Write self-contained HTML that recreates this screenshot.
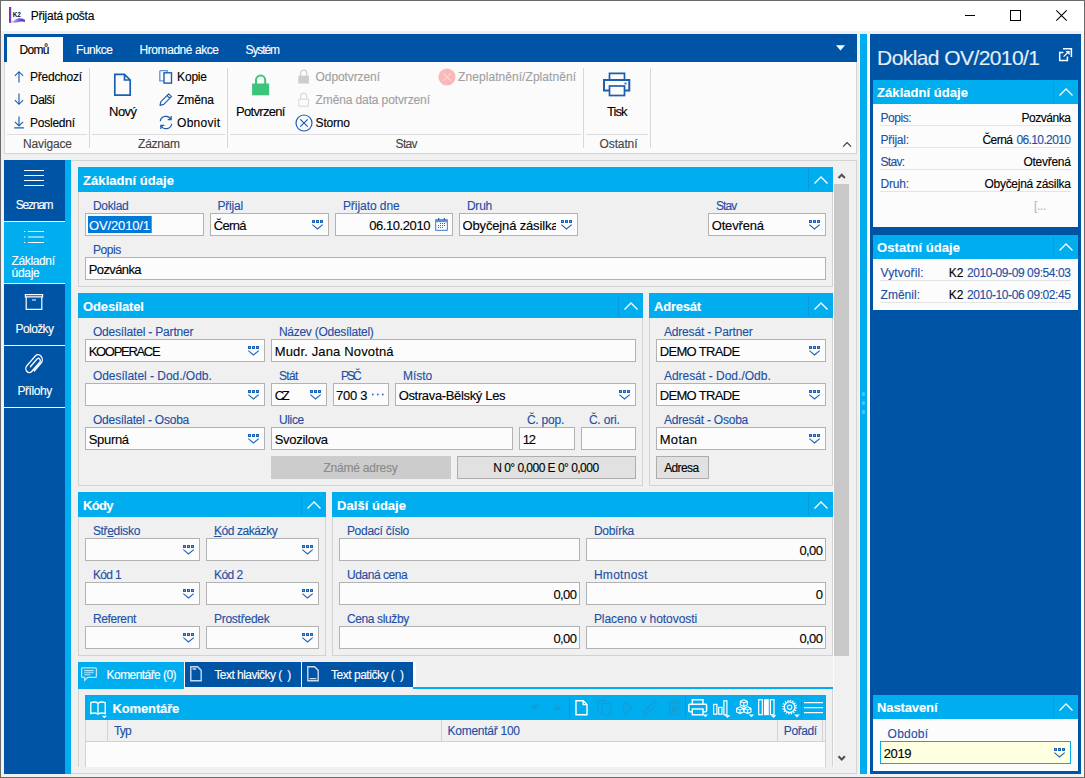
<!DOCTYPE html>
<html lang="cs"><head><meta charset="utf-8"><title>Přijatá pošta</title>
<style>
*{box-sizing:border-box;margin:0;padding:0}
html,body{width:1085px;height:778px;overflow:hidden}
body{background:#f0f0f0;font-family:"Liberation Sans",sans-serif;font-size:12px;position:relative}
.a{position:absolute;display:block}
.t{position:absolute;white-space:nowrap;display:block;-webkit-text-stroke:0.12px currentColor}
u{text-decoration:underline;text-underline-offset:1px}
</style></head>
<body>
<div class="a" style="left:0px;top:0px;width:1085px;height:778px;background:#f0f0f0;"></div>
<div class="a" style="left:1px;top:1px;width:1083px;height:30px;background:#ffffff;"></div>
<svg class="a" style="left:9px;top:7px;" width="17" height="16" viewBox="0 0 17 16"><defs><linearGradient id="k2g" x1="0" x2="1" y1="0" y2="0"><stop offset="0" stop-color="#e6c8f0"/><stop offset="0.45" stop-color="#9a6ad8"/><stop offset="0.75" stop-color="#4a46c8"/><stop offset="1" stop-color="#7a48c0"/></linearGradient></defs><rect x="0" y="0" width="2.2" height="15.8" fill="#7638b8"/><path d="M2.2 15.6 L2.2 14.6 C5 14 7 11.6 10 11.2 C12.5 10.9 14.6 12 16 12.6 L16 15 C13.5 14 11 14.4 8.5 15.3 C6.5 16 4 15.8 2.2 15.6 Z" fill="url(#k2g)"/><text x="3.7" y="10.4" font-family="Liberation Sans" font-weight="bold" font-size="6.4" fill="#111">K2</text></svg>
<span class="t" id="t1" style="top:9px;font-size:12px;line-height:14px;height:14px;color:#000;left:30.70px;letter-spacing:-0.251px;">Přijatá pošta</span>
<svg class="a" style="left:960px;top:4.5px;" width="20" height="20" viewBox="0 0 20 20"><path d="M5 10.5 H15" stroke="#000" stroke-width="1"/></svg>
<svg class="a" style="left:1005px;top:4.5px;" width="20" height="20" viewBox="0 0 20 20"><rect x="5.5" y="5.5" width="10" height="10" fill="none" stroke="#000" stroke-width="1"/></svg>
<svg class="a" style="left:1051px;top:4.5px;" width="20" height="20" viewBox="0 0 20 20"><path d="M5.3 5.3 L15.7 15.7 M15.7 5.3 L5.3 15.7" stroke="#000" stroke-width="1.1"/></svg>
<div class="a" style="left:4px;top:34px;width:853px;height:120px;background:#fbfbfb;border:1px solid #d4d4d4;"></div>
<div class="a" style="left:4px;top:34px;width:853px;height:28px;background:#0054a6;"></div>
<div class="a" style="left:7px;top:37px;width:56px;height:25px;background:#fbfbfb;"></div>
<span class="t" id="t2" style="top:43px;font-size:12px;line-height:14px;height:14px;color:#000;left:19.50px;letter-spacing:-0.705px;">Domů</span>
<span class="t" id="t3" style="top:43px;font-size:12px;line-height:14px;height:14px;color:#fff;left:76.10px;letter-spacing:-0.493px;">Funkce</span>
<span class="t" id="t4" style="top:43px;font-size:12px;line-height:14px;height:14px;color:#fff;left:139.60px;letter-spacing:-0.443px;">Hromadné akce</span>
<span class="t" id="t5" style="top:43px;font-size:12px;line-height:14px;height:14px;color:#fff;left:245.60px;letter-spacing:-1.124px;">Systém</span>
<svg class="a" style="left:836px;top:45px;" width="9" height="6" viewBox="0 0 9 6"><path d="M0 0.3 H9 L4.5 5.6 Z" fill="#fff"/></svg>
<svg class="a" style="left:842px;top:141px;" width="10" height="7" viewBox="0 0 10 7"><path d="M1.1 5.6 L5.1 1.5 L9.1 5.6" fill="none" stroke="#3a3a3a" stroke-width="1.1"/></svg>
<div class="a" style="left:89px;top:68px;width:1px;height:80px;background:#d8d8d8;"></div>
<div class="a" style="left:227px;top:68px;width:1px;height:80px;background:#d8d8d8;"></div>
<div class="a" style="left:583px;top:68px;width:1px;height:80px;background:#d8d8d8;"></div>
<div class="a" style="left:650px;top:68px;width:1px;height:80px;background:#d8d8d8;"></div>
<div class="a" style="left:7px;top:134px;width:80px;height:1px;background:#dcdcdc;"></div>
<div class="a" style="left:92px;top:134px;width:133px;height:1px;background:#dcdcdc;"></div>
<div class="a" style="left:230px;top:134px;width:351px;height:1px;background:#dcdcdc;"></div>
<div class="a" style="left:586px;top:134px;width:62px;height:1px;background:#dcdcdc;"></div>
<span class="t" id="t6" style="top:137px;font-size:12px;line-height:14px;height:14px;color:#444;left:23.10px;letter-spacing:-0.163px;">Navigace</span>
<span class="t" id="t7" style="top:137px;font-size:12px;line-height:14px;height:14px;color:#444;left:138.10px;letter-spacing:-0.290px;">Záznam</span>
<span class="t" id="t8" style="top:137px;font-size:12px;line-height:14px;height:14px;color:#444;left:395.60px;letter-spacing:-0.708px;">Stav</span>
<span class="t" id="t9" style="top:137px;font-size:12px;line-height:14px;height:14px;color:#444;left:599.60px;letter-spacing:-0.131px;">Ostatní</span>
<span class="t" id="t10" style="top:70px;font-size:12px;line-height:14px;height:14px;color:#000;left:30.10px;letter-spacing:-0.266px;">Předchozí</span>
<span class="t" id="t11" style="top:93px;font-size:12px;line-height:14px;height:14px;color:#000;left:30.10px;letter-spacing:-0.610px;">Další</span>
<span class="t" id="t12" style="top:116px;font-size:12px;line-height:14px;height:14px;color:#000;left:30.10px;letter-spacing:-0.258px;">Poslední</span>
<svg class="a" style="left:13px;top:70px;" width="12" height="13" viewBox="0 0 12 13"><path d="M6 1.6 V12.5 M1.9 5.8 L6 1.7 L10.1 5.8" fill="none" stroke="#1c5fb0" stroke-width="1.15"/></svg>
<svg class="a" style="left:13px;top:93px;" width="12" height="13" viewBox="0 0 12 13"><path d="M6 0.5 V11.4 M1.9 7.2 L6 11.3 L10.1 7.2" fill="none" stroke="#1c5fb0" stroke-width="1.15"/></svg>
<svg class="a" style="left:13px;top:115px;" width="12" height="14" viewBox="0 0 12 14"><path d="M6 1.5 V11 M1.9 6.9 L6 11 L10.1 6.9 M1.2 12.9 H10.8" fill="none" stroke="#1c5fb0" stroke-width="1.15"/></svg>
<svg class="a" style="left:113px;top:73px;" width="19" height="24" viewBox="0 0 19 24"><path d="M1.8 1.3 H11.5 L17.2 7 V22.2 H1.8 Z M11.5 1.3 V7 H17.2" fill="none" stroke="#1c5fb0" stroke-width="1.7" stroke-linejoin="miter"/></svg>
<span class="t" id="t13" style="top:104px;font-size:13px;line-height:15px;height:15px;color:#000;left:109.10px;letter-spacing:-0.576px;">Nový</span>
<svg class="a" style="left:158px;top:70px;" width="16" height="15" viewBox="0 0 16 15"><path d="M1.8 0.7 H9.2 V2.6 M1.8 0.7 V10.9 H5.6" fill="none" stroke="#5f93d4" stroke-width="1.3"/><rect x="6" y="2.8" width="7.5" height="10.3" fill="none" stroke="#1c5fb0" stroke-width="1.4"/></svg>
<svg class="a" style="left:158px;top:92px;" width="16" height="15" viewBox="0 0 16 15"><path d="M2 13.3 L2.9 9.6 L10.7 1.8 L13.5 4.6 L5.7 12.4 Z M9 3.5 L11.8 6.3" fill="none" stroke="#1c5fb0" stroke-width="1.2" stroke-linejoin="round"/></svg>
<svg class="a" style="left:158px;top:115px;" width="16" height="15" viewBox="0 0 16 15"><path d="M2.3 6.3 A5.6 5.6 0 0 1 12.8 4.3 M13.2 1 V4.6 H9.7 M13.7 8.7 A5.6 5.6 0 0 1 3.2 10.7 M2.8 14 V10.4 H6.3" fill="none" stroke="#1c5fb0" stroke-width="1.2"/></svg>
<span class="t" id="t14" style="top:70px;font-size:12px;line-height:14px;height:14px;color:#000;left:177.10px;letter-spacing:-0.198px;">Kopie</span>
<span class="t" id="t15" style="top:93px;font-size:12px;line-height:14px;height:14px;color:#000;left:177.10px;letter-spacing:-0.114px;">Změna</span>
<span class="t" id="t16" style="top:116px;font-size:12px;line-height:14px;height:14px;color:#000;left:177.10px;letter-spacing:0.255px;">Obnovit</span>
<svg class="a" style="left:252px;top:73.5px;" width="18" height="22" viewBox="0 0 18 22"><path d="M4 10 V6.2 A4.6 4.6 0 0 1 13.2 6.2 V10" fill="none" stroke="#3cc47a" stroke-width="2"/><rect x="0.1" y="9.5" width="17" height="11.8" fill="#3cc47a"/></svg>
<span class="t" id="t17" style="top:104px;font-size:13px;line-height:15px;height:15px;color:#000;left:236.10px;letter-spacing:-0.691px;">Potvrzení</span>
<svg class="a" style="left:298px;top:69px;" width="12" height="15" viewBox="0 0 12 15"><path d="M2.6 7 V4.2 A3.05 3.05 0 0 1 8.7 4.2 V7" fill="none" stroke="#cfcfcf" stroke-width="1.3"/><rect x="0.3" y="6.7" width="10.7" height="7.8" fill="#cdcdcd"/></svg>
<svg class="a" style="left:298px;top:92px;" width="12" height="15" viewBox="0 0 12 15"><path d="M2.6 7 V4.2 A3.05 3.05 0 0 1 8.7 4.2 V7" fill="none" stroke="#dadada" stroke-width="1.2"/><rect x="0.8" y="7.2" width="9.7" height="7" fill="#fbfbfb" stroke="#dadada" stroke-width="1.1"/></svg>
<svg class="a" style="left:294.5px;top:113.5px;" width="18" height="18" viewBox="0 0 18 18"><circle cx="9" cy="9" r="8" fill="#fbfbfb" stroke="#1c5fb0" stroke-width="1.2"/><path d="M5.3 5.3 L12.7 12.7 M12.7 5.3 L5.3 12.7" stroke="#1c5fb0" stroke-width="1.2"/></svg>
<span class="t" id="t18" style="top:70px;font-size:12px;line-height:14px;height:14px;color:#a0a0a0;left:315.60px;letter-spacing:-0.097px;">Odpotvrzení</span>
<span class="t" id="t19" style="top:93px;font-size:12px;line-height:14px;height:14px;color:#a0a0a0;left:315.60px;letter-spacing:-0.123px;">Změna data potvrzení</span>
<span class="t" id="t20" style="top:116px;font-size:12px;line-height:14px;height:14px;color:#000;left:315.60px;letter-spacing:-0.193px;">Storno</span>
<svg class="a" style="left:438px;top:68px;" width="18" height="18" viewBox="0 0 18 18"><circle cx="9" cy="9" r="8.6" fill="#f9b9b9"/><path d="M5.3 5.3 L12.7 12.7 M12.7 5.3 L5.3 12.7" stroke="#fbd6d6" stroke-width="1.2"/></svg>
<span class="t" id="t21" style="top:70px;font-size:12px;line-height:14px;height:14px;color:#a0a0a0;left:458.10px;letter-spacing:0.057px;">Zneplatnění/Zplatnění</span>
<svg class="a" style="left:603px;top:72px;" width="28" height="25" viewBox="0 0 28 25"><path d="M6.5 8 V1.3 H21.5 V8" fill="none" stroke="#1c5fb0" stroke-width="1.7"/><rect x="1" y="8" width="25.3" height="10.5" fill="none" stroke="#1c5fb0" stroke-width="2"/><rect x="6.5" y="14" width="15" height="9.5" fill="#fbfbfb" stroke="#1c5fb0" stroke-width="1.7"/><rect x="21.5" y="10.7" width="2" height="1.6" fill="#1c5fb0"/></svg>
<span class="t" id="t22" style="top:104px;font-size:13px;line-height:15px;height:15px;color:#000;left:607.10px;letter-spacing:-0.984px;">Tisk</span>
<div class="a" style="left:4px;top:160px;width:61px;height:614px;background:#0054a6;"></div>
<div class="a" style="left:65px;top:160px;width:6px;height:614px;background:#00adef;"></div>
<div class="a" style="left:4px;top:222px;width:61px;height:61px;background:#00adef;"></div>
<div class="a" style="left:4px;top:221px;width:61px;height:1px;background:#ffffff;"></div>
<div class="a" style="left:4px;top:283px;width:61px;height:1px;background:#ffffff;"></div>
<div class="a" style="left:4px;top:345px;width:61px;height:1px;background:#ffffff;"></div>
<div class="a" style="left:4px;top:407px;width:61px;height:1px;background:#ffffff;"></div>
<svg class="a" style="left:24px;top:169px;" width="20" height="18" viewBox="0 0 20 18"><path d="M0 1.5 H20 M0 6.5 H20 M0 11.5 H20 M0 16.5 H20" stroke="#fff" stroke-width="1.2"/></svg>
<span class="t" id="t23" style="top:198px;font-size:12px;line-height:14px;height:14px;color:#fff;left:15.70px;letter-spacing:-1.227px;">Seznam</span>
<svg class="a" style="left:23px;top:229px;" width="22" height="16" viewBox="0 0 22 16"><path d="M5 2.5 H21 M5 8 H21 M5 13.5 H21" stroke="#fff" stroke-width="1.2"/><path d="M1 2.5 H2.3 M1 8 H2.3 M1 13.5 H2.3" stroke="#fff" stroke-width="1.2"/></svg>
<span class="t" id="t24" style="top:254px;font-size:12px;line-height:14px;height:14px;color:#fff;left:11.60px;letter-spacing:-0.377px;">Základní</span>
<span class="t" id="t25" style="top:266px;font-size:12px;line-height:14px;height:14px;color:#fff;left:11.60px;letter-spacing:-0.294px;">údaje</span>
<svg class="a" style="left:24px;top:293px;" width="20" height="18" viewBox="0 0 20 18"><path d="M1.4 1.6 H18.6 V3.9 H1.4 Z M2.2 3.9 V16.3 H17.8 V3.9 M8 7 H12" fill="none" stroke="#fff" stroke-width="1.2"/></svg>
<span class="t" id="t26" style="top:322px;font-size:12px;line-height:14px;height:14px;color:#fff;left:15.60px;letter-spacing:-0.603px;">Položky</span>
<svg class="a" style="left:25px;top:353.4px;" width="19" height="21" viewBox="0 0 19 21"><g transform="scale(0.97,1.12)"><path d="M5.2 12.6 L12.6 5.2 A2 2 0 0 1 15.4 8 L7 16.4 A3.6 3.6 0 0 1 1.9 11.3 L10.6 2.6 A4.4 4.4 0 0 1 16.8 8.8 L9.2 16.4" fill="none" stroke="#fff" stroke-width="1.3"/></g></svg>
<span class="t" id="t27" style="top:384px;font-size:12px;line-height:14px;height:14px;color:#fff;left:17.40px;letter-spacing:-0.410px;">Přílohy</span>
<div class="a" style="left:71px;top:160px;width:786px;height:614px;background:#f0f0f0;border:1px solid #d4d4d4;border-left:none;"></div>
<div class="a" style="left:834px;top:167px;width:16px;height:600px;background:#f0f0f0;"></div>
<div class="a" style="left:834px;top:184px;width:15px;height:472px;background:#c8c8c8;"></div>
<div class="a" style="left:833px;top:167px;width:1px;height:600px;background:#fafafa;"></div>
<svg class="a" style="left:837px;top:172px;" width="10" height="8" viewBox="0 0 10 8"><path d="M1.5 6 L4.7 2.7 L7.9 6" fill="none" stroke="#505050" stroke-width="2"/></svg>
<svg class="a" style="left:837px;top:755px;" width="10" height="8" viewBox="0 0 10 8"><path d="M1.5 1.2 L4.7 4.5 L7.9 1.2" fill="none" stroke="#505050" stroke-width="2"/></svg>
<div class="a" style="left:78px;top:191px;width:755px;height:96px;border:1px solid #d2d2d2;border-top:none;"></div>
<div class="a" style="left:78px;top:167px;width:755px;height:25px;background:#00adef;"></div>
<span class="t" id="t28" style="top:173px;font-size:13px;line-height:15px;height:15px;color:#fff;font-weight:bold;left:83.10px;letter-spacing:0.046px;">Základní údaje</span>
<div class="a" style="left:808px;top:169px;width:1px;height:21px;background:#0a9ad6;"></div>
<svg class="a" style="left:814px;top:176px;" width="14" height="8" viewBox="0 0 14 8"><path d="M0.5 7.5 L7 1 L13.5 7.5" fill="none" stroke="#fff" stroke-width="1.3"/></svg>
<span class="t" id="t29" style="top:199px;font-size:12px;line-height:14px;height:14px;color:#1c4fa4;left:92.90px;letter-spacing:-0.293px;">Doklad</span>
<div class="a" style="left:85px;top:213px;width:119px;height:23px;background:#fcfcfc;border:1px solid #b2b2b2;"></div>
<div class="a" style="left:88px;top:216px;width:63px;height:17px;background:#0078d7;"></div>
<div class="a" style="left:151px;top:216px;width:1px;height:17px;background:#e8781e;"></div>
<span class="t" id="t30" style="top:218px;font-size:13px;line-height:15px;height:15px;color:#fff;left:89.10px;letter-spacing:-0.157px;">OV/2010/1</span>
<span class="t" id="t31" style="top:199px;font-size:12px;line-height:14px;height:14px;color:#1c4fa4;left:217.40px;letter-spacing:-0.155px;">Přijal</span>
<div class="a" style="left:210px;top:213px;width:119px;height:23px;background:#fcfcfc;border:1px solid #b2b2b2;"></div>
<span class="t" id="t32" style="top:218px;font-size:13px;line-height:15px;height:15px;color:#000;left:213.70px;letter-spacing:-0.630px;">Černá</span>
<svg class="a" style="left:312px;top:220px;" width="12" height="10" viewBox="0 0 12 10"><rect x="0" y="0" width="3" height="3" fill="#1f63b6"/><rect x="1" y="1" width="1" height="1" fill="#6a9ad6"/><rect x="4" y="0" width="3" height="3" fill="#1f63b6"/><rect x="5" y="1" width="1" height="1" fill="#6a9ad6"/><rect x="8" y="0" width="3" height="3" fill="#1f63b6"/><rect x="9" y="1" width="1" height="1" fill="#6a9ad6"/><path d="M0.3 4.6 L5.5 9 L10.7 4.6" fill="none" stroke="#1f63b6" stroke-width="1.15"/></svg>
<span class="t" id="t33" style="top:199px;font-size:12px;line-height:14px;height:14px;color:#1c4fa4;left:342.90px;letter-spacing:-0.048px;">Přijato dne</span>
<div class="a" style="left:335px;top:213px;width:118px;height:23px;background:#fcfcfc;border:1px solid #b2b2b2;"></div>
<span class="t" id="t34" style="top:218px;font-size:13px;line-height:15px;height:15px;color:#000;right:655.03px;letter-spacing:-0.430px;">06.10.2010</span>
<svg class="a" style="left:435px;top:218px;" width="13" height="13" viewBox="0 0 13 13"><rect x="0.6" y="1.6" width="11.8" height="10.8" rx="1" fill="#fff" stroke="#5f93d4" stroke-width="1.3"/><rect x="0.6" y="1.6" width="11.8" height="2.6" fill="#5f93d4"/><rect x="3" y="0" width="1.2" height="2.2" fill="#2a62b0"/><rect x="8.8" y="0" width="1.2" height="2.2" fill="#2a62b0"/><g fill="#2a66b4"><rect x="5" y="5" width="1" height="1"/><rect x="7" y="5" width="1" height="1"/><rect x="9" y="5" width="1" height="1"/><rect x="3" y="7" width="1" height="1"/><rect x="5" y="7" width="1" height="1"/><rect x="7" y="7" width="1" height="1"/><rect x="9" y="7" width="1" height="1"/><rect x="3" y="9" width="1" height="1"/><rect x="5" y="9" width="1" height="1"/><rect x="7" y="9" width="1" height="1"/></g></svg>
<span class="t" id="t35" style="top:199px;font-size:12px;line-height:14px;height:14px;color:#1c4fa4;left:466.90px;letter-spacing:-0.208px;">Druh</span>
<div class="a" style="left:459px;top:213px;width:119px;height:23px;background:#fcfcfc;border:1px solid #b2b2b2;"></div>
<svg class="a" style="left:561px;top:220px;" width="12" height="10" viewBox="0 0 12 10"><rect x="0" y="0" width="3" height="3" fill="#1f63b6"/><rect x="1" y="1" width="1" height="1" fill="#6a9ad6"/><rect x="4" y="0" width="3" height="3" fill="#1f63b6"/><rect x="5" y="1" width="1" height="1" fill="#6a9ad6"/><rect x="8" y="0" width="3" height="3" fill="#1f63b6"/><rect x="9" y="1" width="1" height="1" fill="#6a9ad6"/><path d="M0.3 4.6 L5.5 9 L10.7 4.6" fill="none" stroke="#1f63b6" stroke-width="1.15"/></svg>
<div class="a" style="left:462.5px;top:214px;width:93.5px;height:21px;overflow:hidden">
<span class="t" id="t36" style="top:4px;font-size:13px;line-height:15px;height:15px;color:#000;left:0.10px;letter-spacing:-0.159px;">Obyčejná zásilka</span>
</div>
<span class="t" id="t37" style="top:199px;font-size:12px;line-height:14px;height:14px;color:#1c4fa4;left:715.90px;letter-spacing:-0.872px;">Stav</span>
<div class="a" style="left:708px;top:213px;width:118px;height:23px;background:#fcfcfc;border:1px solid #b2b2b2;"></div>
<span class="t" id="t38" style="top:218px;font-size:13px;line-height:15px;height:15px;color:#000;left:711.70px;letter-spacing:-0.153px;">Otevřená</span>
<svg class="a" style="left:809px;top:220px;" width="12" height="10" viewBox="0 0 12 10"><rect x="0" y="0" width="3" height="3" fill="#1f63b6"/><rect x="1" y="1" width="1" height="1" fill="#6a9ad6"/><rect x="4" y="0" width="3" height="3" fill="#1f63b6"/><rect x="5" y="1" width="1" height="1" fill="#6a9ad6"/><rect x="8" y="0" width="3" height="3" fill="#1f63b6"/><rect x="9" y="1" width="1" height="1" fill="#6a9ad6"/><path d="M0.3 4.6 L5.5 9 L10.7 4.6" fill="none" stroke="#1f63b6" stroke-width="1.15"/></svg>
<span class="t" id="t39" style="top:243px;font-size:12px;line-height:14px;height:14px;color:#1c4fa4;left:92.90px;letter-spacing:-0.408px;">Popis</span>
<div class="a" style="left:85px;top:257px;width:741px;height:23px;background:#fcfcfc;border:1px solid #b2b2b2;"></div>
<span class="t" id="t40" style="top:262px;font-size:13px;line-height:15px;height:15px;color:#000;left:88.70px;letter-spacing:-0.599px;">Pozvánka</span>
<div class="a" style="left:78px;top:317px;width:565px;height:169px;border:1px solid #d2d2d2;border-top:none;"></div>
<div class="a" style="left:78px;top:293px;width:565px;height:25px;background:#00adef;"></div>
<span class="t" id="t41" style="top:299px;font-size:13px;line-height:15px;height:15px;color:#fff;font-weight:bold;left:83.10px;letter-spacing:-0.139px;">Odesílatel</span>
<div class="a" style="left:618px;top:295px;width:1px;height:21px;background:#0a9ad6;"></div>
<svg class="a" style="left:624px;top:302px;" width="14" height="8" viewBox="0 0 14 8"><path d="M0.5 7.5 L7 1 L13.5 7.5" fill="none" stroke="#fff" stroke-width="1.3"/></svg>
<span class="t" id="t42" style="top:325px;font-size:12px;line-height:14px;height:14px;color:#1c4fa4;left:92.90px;letter-spacing:-0.177px;">Odesílatel - Partner</span>
<div class="a" style="left:85px;top:339px;width:180px;height:23px;background:#fcfcfc;border:1px solid #b2b2b2;"></div>
<span class="t" id="t43" style="top:344px;font-size:13px;line-height:15px;height:15px;color:#000;left:88.70px;letter-spacing:-1.309px;">KOOPERACE</span>
<svg class="a" style="left:248px;top:346px;" width="12" height="10" viewBox="0 0 12 10"><rect x="0" y="0" width="3" height="3" fill="#1f63b6"/><rect x="1" y="1" width="1" height="1" fill="#6a9ad6"/><rect x="4" y="0" width="3" height="3" fill="#1f63b6"/><rect x="5" y="1" width="1" height="1" fill="#6a9ad6"/><rect x="8" y="0" width="3" height="3" fill="#1f63b6"/><rect x="9" y="1" width="1" height="1" fill="#6a9ad6"/><path d="M0.3 4.6 L5.5 9 L10.7 4.6" fill="none" stroke="#1f63b6" stroke-width="1.15"/></svg>
<span class="t" id="t44" style="top:325px;font-size:12px;line-height:14px;height:14px;color:#1c4fa4;left:278.90px;letter-spacing:-0.263px;">Název (Odesílatel)</span>
<div class="a" style="left:271px;top:339px;width:365px;height:23px;background:#fcfcfc;border:1px solid #b2b2b2;"></div>
<span class="t" id="t45" style="top:344px;font-size:13px;line-height:15px;height:15px;color:#000;left:274.70px;letter-spacing:0.150px;">Mudr. Jana Novotná</span>
<span class="t" id="t46" style="top:369px;font-size:12px;line-height:14px;height:14px;color:#1c4fa4;left:92.90px;letter-spacing:-0.024px;">Odesílatel - Dod./Odb.</span>
<div class="a" style="left:85px;top:383px;width:180px;height:23px;background:#fcfcfc;border:1px solid #b2b2b2;"></div>
<svg class="a" style="left:248px;top:390px;" width="12" height="10" viewBox="0 0 12 10"><rect x="0" y="0" width="3" height="3" fill="#1f63b6"/><rect x="1" y="1" width="1" height="1" fill="#6a9ad6"/><rect x="4" y="0" width="3" height="3" fill="#1f63b6"/><rect x="5" y="1" width="1" height="1" fill="#6a9ad6"/><rect x="8" y="0" width="3" height="3" fill="#1f63b6"/><rect x="9" y="1" width="1" height="1" fill="#6a9ad6"/><path d="M0.3 4.6 L5.5 9 L10.7 4.6" fill="none" stroke="#1f63b6" stroke-width="1.15"/></svg>
<span class="t" id="t47" style="top:369px;font-size:12px;line-height:14px;height:14px;color:#1c4fa4;left:278.90px;letter-spacing:-0.649px;">Stát</span>
<div class="a" style="left:271px;top:383px;width:56px;height:23px;background:#fcfcfc;border:1px solid #b2b2b2;"></div>
<span class="t" id="t48" style="top:388px;font-size:13px;line-height:15px;height:15px;color:#000;left:274.70px;letter-spacing:-2.440px;">CZ</span>
<svg class="a" style="left:310px;top:390px;" width="12" height="10" viewBox="0 0 12 10"><rect x="0" y="0" width="3" height="3" fill="#1f63b6"/><rect x="1" y="1" width="1" height="1" fill="#6a9ad6"/><rect x="4" y="0" width="3" height="3" fill="#1f63b6"/><rect x="5" y="1" width="1" height="1" fill="#6a9ad6"/><rect x="8" y="0" width="3" height="3" fill="#1f63b6"/><rect x="9" y="1" width="1" height="1" fill="#6a9ad6"/><path d="M0.3 4.6 L5.5 9 L10.7 4.6" fill="none" stroke="#1f63b6" stroke-width="1.15"/></svg>
<span class="t" id="t49" style="top:369px;font-size:12px;line-height:14px;height:14px;color:#1c4fa4;left:340.90px;letter-spacing:-1.893px;">PSČ</span>
<div class="a" style="left:333px;top:383px;width:56px;height:23px;background:#fcfcfc;border:1px solid #b2b2b2;"></div>
<span class="t" id="t50" style="top:388px;font-size:13px;line-height:15px;height:15px;color:#000;left:336.10px;letter-spacing:-0.284px;">700 3</span>
<svg class="a" style="left:372px;top:393px;" width="13" height="3" viewBox="0 0 13 3"><rect x="0" y="0.7" width="1.6" height="1.6" fill="#2a66b4"/><rect x="5" y="0.7" width="1.6" height="1.6" fill="#2a66b4"/><rect x="10" y="0.7" width="1.6" height="1.6" fill="#2a66b4"/></svg>
<span class="t" id="t51" style="top:369px;font-size:12px;line-height:14px;height:14px;color:#1c4fa4;left:402.90px;letter-spacing:0.013px;">Místo</span>
<div class="a" style="left:395px;top:383px;width:241px;height:23px;background:#fcfcfc;border:1px solid #b2b2b2;"></div>
<span class="t" id="t52" style="top:388px;font-size:13px;line-height:15px;height:15px;color:#000;left:398.70px;letter-spacing:-0.342px;">Ostrava-Bělský Les</span>
<svg class="a" style="left:619px;top:390px;" width="12" height="10" viewBox="0 0 12 10"><rect x="0" y="0" width="3" height="3" fill="#1f63b6"/><rect x="1" y="1" width="1" height="1" fill="#6a9ad6"/><rect x="4" y="0" width="3" height="3" fill="#1f63b6"/><rect x="5" y="1" width="1" height="1" fill="#6a9ad6"/><rect x="8" y="0" width="3" height="3" fill="#1f63b6"/><rect x="9" y="1" width="1" height="1" fill="#6a9ad6"/><path d="M0.3 4.6 L5.5 9 L10.7 4.6" fill="none" stroke="#1f63b6" stroke-width="1.15"/></svg>
<span class="t" id="t53" style="top:413px;font-size:12px;line-height:14px;height:14px;color:#1c4fa4;left:92.90px;letter-spacing:-0.215px;">Odesílatel - Osoba</span>
<div class="a" style="left:85px;top:427px;width:180px;height:23px;background:#fcfcfc;border:1px solid #b2b2b2;"></div>
<span class="t" id="t54" style="top:432px;font-size:13px;line-height:15px;height:15px;color:#000;left:88.70px;letter-spacing:-0.306px;">Spurná</span>
<svg class="a" style="left:248px;top:434px;" width="12" height="10" viewBox="0 0 12 10"><rect x="0" y="0" width="3" height="3" fill="#1f63b6"/><rect x="1" y="1" width="1" height="1" fill="#6a9ad6"/><rect x="4" y="0" width="3" height="3" fill="#1f63b6"/><rect x="5" y="1" width="1" height="1" fill="#6a9ad6"/><rect x="8" y="0" width="3" height="3" fill="#1f63b6"/><rect x="9" y="1" width="1" height="1" fill="#6a9ad6"/><path d="M0.3 4.6 L5.5 9 L10.7 4.6" fill="none" stroke="#1f63b6" stroke-width="1.15"/></svg>
<span class="t" id="t55" style="top:413px;font-size:12px;line-height:14px;height:14px;color:#1c4fa4;left:278.90px;letter-spacing:-0.321px;">Ulice</span>
<div class="a" style="left:271px;top:427px;width:242px;height:23px;background:#fcfcfc;border:1px solid #b2b2b2;"></div>
<span class="t" id="t56" style="top:432px;font-size:13px;line-height:15px;height:15px;color:#000;left:274.70px;letter-spacing:-0.280px;">Svozilova</span>
<span class="t" id="t57" style="top:413px;font-size:12px;line-height:14px;height:14px;color:#1c4fa4;left:526.90px;letter-spacing:-0.217px;">Č. pop.</span>
<div class="a" style="left:519px;top:427px;width:56px;height:23px;background:#fcfcfc;border:1px solid #b2b2b2;"></div>
<span class="t" id="t58" style="top:432px;font-size:13px;line-height:15px;height:15px;color:#000;left:522.70px;letter-spacing:-1.066px;">12</span>
<span class="t" id="t59" style="top:413px;font-size:12px;line-height:14px;height:14px;color:#1c4fa4;left:588.90px;letter-spacing:-0.185px;">Č. ori.</span>
<div class="a" style="left:581px;top:427px;width:55px;height:23px;background:#fcfcfc;border:1px solid #b2b2b2;"></div>
<div class="a" style="left:271px;top:456px;width:180px;height:23px;background:#cccccc;"></div>
<span class="t" id="t60" style="top:461px;font-size:12px;line-height:14px;height:14px;color:#8a8a8a;left:323.45px;letter-spacing:-0.209px;">Známé adresy</span>
<div class="a" style="left:457px;top:456px;width:179px;height:23px;background:#e1e1e1;border:1px solid #adadad;"></div>
<span class="t" id="t61" style="top:461px;font-size:12px;line-height:14px;height:14px;color:#000;left:493.20px;letter-spacing:-0.523px;">N 0° 0,000 E 0° 0,000</span>
<div class="a" style="left:649px;top:317px;width:184px;height:169px;border:1px solid #d2d2d2;border-top:none;"></div>
<div class="a" style="left:649px;top:293px;width:184px;height:25px;background:#00adef;"></div>
<span class="t" id="t62" style="top:299px;font-size:13px;line-height:15px;height:15px;color:#fff;font-weight:bold;left:654.10px;letter-spacing:-0.254px;">Adresát</span>
<div class="a" style="left:808px;top:295px;width:1px;height:21px;background:#0a9ad6;"></div>
<svg class="a" style="left:814px;top:302px;" width="14" height="8" viewBox="0 0 14 8"><path d="M0.5 7.5 L7 1 L13.5 7.5" fill="none" stroke="#fff" stroke-width="1.3"/></svg>
<span class="t" id="t63" style="top:325px;font-size:12px;line-height:14px;height:14px;color:#1c4fa4;left:663.90px;letter-spacing:-0.155px;">Adresát - Partner</span>
<div class="a" style="left:656px;top:339px;width:170px;height:23px;background:#fcfcfc;border:1px solid #b2b2b2;"></div>
<span class="t" id="t64" style="top:344px;font-size:13px;line-height:15px;height:15px;color:#000;left:659.70px;letter-spacing:-0.671px;">DEMO TRADE</span>
<svg class="a" style="left:809px;top:346px;" width="12" height="10" viewBox="0 0 12 10"><rect x="0" y="0" width="3" height="3" fill="#1f63b6"/><rect x="1" y="1" width="1" height="1" fill="#6a9ad6"/><rect x="4" y="0" width="3" height="3" fill="#1f63b6"/><rect x="5" y="1" width="1" height="1" fill="#6a9ad6"/><rect x="8" y="0" width="3" height="3" fill="#1f63b6"/><rect x="9" y="1" width="1" height="1" fill="#6a9ad6"/><path d="M0.3 4.6 L5.5 9 L10.7 4.6" fill="none" stroke="#1f63b6" stroke-width="1.15"/></svg>
<span class="t" id="t65" style="top:369px;font-size:12px;line-height:14px;height:14px;color:#1c4fa4;left:663.90px;letter-spacing:0.009px;">Adresát - Dod./Odb.</span>
<div class="a" style="left:656px;top:383px;width:170px;height:23px;background:#fcfcfc;border:1px solid #b2b2b2;"></div>
<span class="t" id="t66" style="top:388px;font-size:13px;line-height:15px;height:15px;color:#000;left:659.70px;letter-spacing:-0.671px;">DEMO TRADE</span>
<svg class="a" style="left:809px;top:390px;" width="12" height="10" viewBox="0 0 12 10"><rect x="0" y="0" width="3" height="3" fill="#1f63b6"/><rect x="1" y="1" width="1" height="1" fill="#6a9ad6"/><rect x="4" y="0" width="3" height="3" fill="#1f63b6"/><rect x="5" y="1" width="1" height="1" fill="#6a9ad6"/><rect x="8" y="0" width="3" height="3" fill="#1f63b6"/><rect x="9" y="1" width="1" height="1" fill="#6a9ad6"/><path d="M0.3 4.6 L5.5 9 L10.7 4.6" fill="none" stroke="#1f63b6" stroke-width="1.15"/></svg>
<span class="t" id="t67" style="top:413px;font-size:12px;line-height:14px;height:14px;color:#1c4fa4;left:663.90px;letter-spacing:-0.213px;">Adresát - Osoba</span>
<div class="a" style="left:656px;top:427px;width:170px;height:23px;background:#fcfcfc;border:1px solid #b2b2b2;"></div>
<span class="t" id="t68" style="top:432px;font-size:13px;line-height:15px;height:15px;color:#000;left:659.70px;letter-spacing:0.317px;">Motan</span>
<svg class="a" style="left:809px;top:434px;" width="12" height="10" viewBox="0 0 12 10"><rect x="0" y="0" width="3" height="3" fill="#1f63b6"/><rect x="1" y="1" width="1" height="1" fill="#6a9ad6"/><rect x="4" y="0" width="3" height="3" fill="#1f63b6"/><rect x="5" y="1" width="1" height="1" fill="#6a9ad6"/><rect x="8" y="0" width="3" height="3" fill="#1f63b6"/><rect x="9" y="1" width="1" height="1" fill="#6a9ad6"/><path d="M0.3 4.6 L5.5 9 L10.7 4.6" fill="none" stroke="#1f63b6" stroke-width="1.15"/></svg>
<div class="a" style="left:656px;top:456px;width:53px;height:23px;background:#e1e1e1;border:1px solid #adadad;"></div>
<span class="t" id="t69" style="top:461px;font-size:12px;line-height:14px;height:14px;color:#000;left:664.20px;letter-spacing:-0.625px;">Adresa</span>
<div class="a" style="left:78px;top:516px;width:248px;height:140px;border:1px solid #d2d2d2;border-top:none;"></div>
<div class="a" style="left:78px;top:492px;width:248px;height:25px;background:#00adef;"></div>
<span class="t" id="t70" style="top:498px;font-size:13px;line-height:15px;height:15px;color:#fff;font-weight:bold;left:83.10px;letter-spacing:-0.700px;">Kódy</span>
<div class="a" style="left:301px;top:494px;width:1px;height:21px;background:#0a9ad6;"></div>
<svg class="a" style="left:307px;top:501px;" width="14" height="8" viewBox="0 0 14 8"><path d="M0.5 7.5 L7 1 L13.5 7.5" fill="none" stroke="#fff" stroke-width="1.3"/></svg>
<span class="t" id="t71" style="top:524px;font-size:12px;line-height:14px;height:14px;color:#1c4fa4;left:92.90px;letter-spacing:-0.330px;">Stř<u>e</u>disko</span>
<div class="a" style="left:85px;top:538px;width:115px;height:23px;background:#fcfcfc;border:1px solid #b2b2b2;"></div>
<svg class="a" style="left:183px;top:545px;" width="12" height="10" viewBox="0 0 12 10"><rect x="0" y="0" width="3" height="3" fill="#1f63b6"/><rect x="1" y="1" width="1" height="1" fill="#6a9ad6"/><rect x="4" y="0" width="3" height="3" fill="#1f63b6"/><rect x="5" y="1" width="1" height="1" fill="#6a9ad6"/><rect x="8" y="0" width="3" height="3" fill="#1f63b6"/><rect x="9" y="1" width="1" height="1" fill="#6a9ad6"/><path d="M0.3 4.6 L5.5 9 L10.7 4.6" fill="none" stroke="#1f63b6" stroke-width="1.15"/></svg>
<span class="t" id="t72" style="top:524px;font-size:12px;line-height:14px;height:14px;color:#1c4fa4;left:213.90px;letter-spacing:-0.415px;"><u>K</u>ód zakázky</span>
<div class="a" style="left:206px;top:538px;width:113px;height:23px;background:#fcfcfc;border:1px solid #b2b2b2;"></div>
<svg class="a" style="left:302px;top:545px;" width="12" height="10" viewBox="0 0 12 10"><rect x="0" y="0" width="3" height="3" fill="#1f63b6"/><rect x="1" y="1" width="1" height="1" fill="#6a9ad6"/><rect x="4" y="0" width="3" height="3" fill="#1f63b6"/><rect x="5" y="1" width="1" height="1" fill="#6a9ad6"/><rect x="8" y="0" width="3" height="3" fill="#1f63b6"/><rect x="9" y="1" width="1" height="1" fill="#6a9ad6"/><path d="M0.3 4.6 L5.5 9 L10.7 4.6" fill="none" stroke="#1f63b6" stroke-width="1.15"/></svg>
<span class="t" id="t73" style="top:568px;font-size:12px;line-height:14px;height:14px;color:#1c4fa4;left:92.90px;letter-spacing:-0.618px;">Kód 1</span>
<div class="a" style="left:85px;top:582px;width:115px;height:23px;background:#fcfcfc;border:1px solid #b2b2b2;"></div>
<svg class="a" style="left:183px;top:589px;" width="12" height="10" viewBox="0 0 12 10"><rect x="0" y="0" width="3" height="3" fill="#1f63b6"/><rect x="1" y="1" width="1" height="1" fill="#6a9ad6"/><rect x="4" y="0" width="3" height="3" fill="#1f63b6"/><rect x="5" y="1" width="1" height="1" fill="#6a9ad6"/><rect x="8" y="0" width="3" height="3" fill="#1f63b6"/><rect x="9" y="1" width="1" height="1" fill="#6a9ad6"/><path d="M0.3 4.6 L5.5 9 L10.7 4.6" fill="none" stroke="#1f63b6" stroke-width="1.15"/></svg>
<span class="t" id="t74" style="top:568px;font-size:12px;line-height:14px;height:14px;color:#1c4fa4;left:213.90px;letter-spacing:-0.493px;">Kód 2</span>
<div class="a" style="left:206px;top:582px;width:113px;height:23px;background:#fcfcfc;border:1px solid #b2b2b2;"></div>
<svg class="a" style="left:302px;top:589px;" width="12" height="10" viewBox="0 0 12 10"><rect x="0" y="0" width="3" height="3" fill="#1f63b6"/><rect x="1" y="1" width="1" height="1" fill="#6a9ad6"/><rect x="4" y="0" width="3" height="3" fill="#1f63b6"/><rect x="5" y="1" width="1" height="1" fill="#6a9ad6"/><rect x="8" y="0" width="3" height="3" fill="#1f63b6"/><rect x="9" y="1" width="1" height="1" fill="#6a9ad6"/><path d="M0.3 4.6 L5.5 9 L10.7 4.6" fill="none" stroke="#1f63b6" stroke-width="1.15"/></svg>
<span class="t" id="t75" style="top:612px;font-size:12px;line-height:14px;height:14px;color:#1c4fa4;left:92.90px;letter-spacing:-0.377px;">Referent</span>
<div class="a" style="left:85px;top:626px;width:115px;height:23px;background:#fcfcfc;border:1px solid #b2b2b2;"></div>
<svg class="a" style="left:183px;top:633px;" width="12" height="10" viewBox="0 0 12 10"><rect x="0" y="0" width="3" height="3" fill="#1f63b6"/><rect x="1" y="1" width="1" height="1" fill="#6a9ad6"/><rect x="4" y="0" width="3" height="3" fill="#1f63b6"/><rect x="5" y="1" width="1" height="1" fill="#6a9ad6"/><rect x="8" y="0" width="3" height="3" fill="#1f63b6"/><rect x="9" y="1" width="1" height="1" fill="#6a9ad6"/><path d="M0.3 4.6 L5.5 9 L10.7 4.6" fill="none" stroke="#1f63b6" stroke-width="1.15"/></svg>
<span class="t" id="t76" style="top:612px;font-size:12px;line-height:14px;height:14px;color:#1c4fa4;left:213.90px;letter-spacing:-0.236px;">Prostředek</span>
<div class="a" style="left:206px;top:626px;width:113px;height:23px;background:#fcfcfc;border:1px solid #b2b2b2;"></div>
<svg class="a" style="left:302px;top:633px;" width="12" height="10" viewBox="0 0 12 10"><rect x="0" y="0" width="3" height="3" fill="#1f63b6"/><rect x="1" y="1" width="1" height="1" fill="#6a9ad6"/><rect x="4" y="0" width="3" height="3" fill="#1f63b6"/><rect x="5" y="1" width="1" height="1" fill="#6a9ad6"/><rect x="8" y="0" width="3" height="3" fill="#1f63b6"/><rect x="9" y="1" width="1" height="1" fill="#6a9ad6"/><path d="M0.3 4.6 L5.5 9 L10.7 4.6" fill="none" stroke="#1f63b6" stroke-width="1.15"/></svg>
<div class="a" style="left:332px;top:516px;width:501px;height:140px;border:1px solid #d2d2d2;border-top:none;"></div>
<div class="a" style="left:332px;top:492px;width:501px;height:25px;background:#00adef;"></div>
<span class="t" id="t77" style="top:498px;font-size:13px;line-height:15px;height:15px;color:#fff;font-weight:bold;left:337.10px;letter-spacing:0.025px;">Další údaje</span>
<div class="a" style="left:808px;top:494px;width:1px;height:21px;background:#0a9ad6;"></div>
<svg class="a" style="left:814px;top:501px;" width="14" height="8" viewBox="0 0 14 8"><path d="M0.5 7.5 L7 1 L13.5 7.5" fill="none" stroke="#fff" stroke-width="1.3"/></svg>
<span class="t" id="t78" style="top:524px;font-size:12px;line-height:14px;height:14px;color:#1c4fa4;left:346.90px;letter-spacing:-0.270px;">Podací číslo</span>
<div class="a" style="left:339px;top:538px;width:241px;height:23px;background:#fcfcfc;border:1px solid #b2b2b2;"></div>
<span class="t" id="t79" style="top:524px;font-size:12px;line-height:14px;height:14px;color:#1c4fa4;left:593.90px;letter-spacing:-0.271px;">Dobírka</span>
<div class="a" style="left:586px;top:538px;width:240px;height:23px;background:#fcfcfc;border:1px solid #b2b2b2;"></div>
<span class="t" id="t80" style="top:543px;font-size:13px;line-height:15px;height:15px;color:#000;right:262.74px;letter-spacing:-0.638px;">0,00</span>
<span class="t" id="t81" style="top:568px;font-size:12px;line-height:14px;height:14px;color:#1c4fa4;left:346.90px;letter-spacing:-0.425px;">Udaná cena</span>
<div class="a" style="left:339px;top:582px;width:241px;height:23px;background:#fcfcfc;border:1px solid #b2b2b2;"></div>
<span class="t" id="t82" style="top:587px;font-size:13px;line-height:15px;height:15px;color:#000;right:508.74px;letter-spacing:-0.638px;">0,00</span>
<span class="t" id="t83" style="top:568px;font-size:12px;line-height:14px;height:14px;color:#1c4fa4;left:593.90px;letter-spacing:0.292px;">Hmotnost</span>
<div class="a" style="left:586px;top:582px;width:240px;height:23px;background:#fcfcfc;border:1px solid #b2b2b2;"></div>
<span class="t" id="t84" style="top:587px;font-size:13px;line-height:15px;height:15px;color:#000;right:262.43px;letter-spacing:-0.334px;">0</span>
<span class="t" id="t85" style="top:612px;font-size:12px;line-height:14px;height:14px;color:#1c4fa4;left:346.90px;letter-spacing:-0.365px;">Cena služby</span>
<div class="a" style="left:339px;top:626px;width:241px;height:23px;background:#fcfcfc;border:1px solid #b2b2b2;"></div>
<span class="t" id="t86" style="top:631px;font-size:13px;line-height:15px;height:15px;color:#000;right:508.74px;letter-spacing:-0.638px;">0,00</span>
<span class="t" id="t87" style="top:612px;font-size:12px;line-height:14px;height:14px;color:#1c4fa4;left:593.90px;letter-spacing:-0.038px;">Placeno v hotovosti</span>
<div class="a" style="left:586px;top:626px;width:240px;height:23px;background:#fcfcfc;border:1px solid #b2b2b2;"></div>
<span class="t" id="t88" style="top:631px;font-size:13px;line-height:15px;height:15px;color:#000;right:262.74px;letter-spacing:-0.638px;">0,00</span>
<div class="a" style="left:413px;top:687px;width:420px;height:2px;background:#00adef;"></div>
<div class="a" style="left:78px;top:662px;width:106px;height:27px;background:#00adef;"></div>
<div class="a" style="left:185px;top:662px;width:117px;height:25px;background:#0054a6;"></div>
<div class="a" style="left:302px;top:662px;width:111px;height:25px;background:#0054a6;"></div>
<div class="a" style="left:184px;top:662px;width:1px;height:27px;background:#ffffff;"></div>
<div class="a" style="left:301px;top:662px;width:1px;height:25px;background:#ffffff;"></div>
<div class="a" style="left:413px;top:662px;width:3px;height:25px;background:#ffffff;"></div>
<svg class="a" style="left:81px;top:667px;" width="17" height="15" viewBox="0 0 17 15"><path d="M1.6 0.8 H14.4 Q15.4 0.8 15.4 1.8 V9.4 Q15.4 10.4 14.4 10.4 H6.6 L3.6 13.2 V10.4 H1.6 Q0.6 10.4 0.6 9.4 V1.8 Q0.6 0.8 1.6 0.8 Z" fill="none" stroke="#b8e6fb" stroke-width="1.3"/><path d="M3.3 3.6 H12.7 M3.3 5.7 H12.7 M3.3 7.8 H9.5" stroke="#b8e6fb" stroke-width="1.1"/></svg>
<span class="t" id="t89" style="top:668px;font-size:12px;line-height:14px;height:14px;color:#fff;left:106.60px;letter-spacing:-0.567px;">Komentáře (0)</span>
<svg class="a" style="left:190px;top:666px;" width="12" height="16" viewBox="0 0 12 16"><path d="M0.8 0.8 H7.6 L11.2 4.4 V14.8 H0.8 Z M2.6 3 H6.2" fill="none" stroke="#c9d9ee" stroke-width="1.4"/></svg>
<span class="t" id="t90" style="top:668px;font-size:12px;line-height:14px;height:14px;color:#fff;left:214.40px;letter-spacing:-0.536px;">Text hlavičky (  )</span>
<svg class="a" style="left:307px;top:666px;" width="12" height="16" viewBox="0 0 12 16"><path d="M0.8 0.8 H7.6 L11.2 4.4 V14.8 H0.8 Z M2.6 12.6 H9.4" fill="none" stroke="#c9d9ee" stroke-width="1.4"/></svg>
<span class="t" id="t91" style="top:668px;font-size:12px;line-height:14px;height:14px;color:#fff;left:331.10px;letter-spacing:-0.487px;">Text patičky (  )</span>
<div class="a" style="left:78px;top:689px;width:755px;height:78px;border:1px solid #d2d2d2;border-top:none;border-bottom:none;"></div>
<div class="a" style="left:85px;top:695px;width:741px;height:25px;background:#00adef;"></div>
<svg class="a" style="left:90px;top:700.5px;" width="18" height="18" viewBox="0 0 18 18"><path d="M8 2.3 C6 0.8 3 0.8 0.8 1.6 V12.6 C3 11.8 6 11.8 8 13.3 C10 11.8 13 11.8 15.2 12.6 V1.6 C13 0.8 10 0.8 8 2.3 V13.3" fill="none" stroke="#fff" stroke-width="1.3"/><path d="M11.8 14.8 H17 L14.4 17.3 Z" fill="#fff"/></svg>
<span class="t" id="t92" style="top:701px;font-size:13px;line-height:15px;height:15px;color:#fff;font-weight:bold;left:112.60px;letter-spacing:-0.151px;">Komentáře</span>
<div class="a" style="left:85px;top:720px;width:741px;height:22px;background:#f0f0f0;border:1px solid #d2d2d2;border-top:none;"></div>
<div class="a" style="left:85px;top:742px;width:741px;height:25px;background:#fcfcfc;border:1px solid #d2d2d2;border-top:none;border-bottom:none;"></div>
<div class="a" style="left:107px;top:720px;width:1px;height:21px;background:#d2d2d2;"></div>
<div class="a" style="left:441px;top:720px;width:1px;height:21px;background:#d2d2d2;"></div>
<div class="a" style="left:777px;top:720px;width:1px;height:21px;background:#d2d2d2;"></div>
<div class="a" style="left:822px;top:720px;width:1px;height:21px;background:#d2d2d2;"></div>
<span class="t" id="t93" style="top:724px;font-size:12px;line-height:14px;height:14px;color:#1c4fa4;left:113.90px;letter-spacing:-0.723px;">Typ</span>
<span class="t" id="t94" style="top:724px;font-size:12px;line-height:14px;height:14px;color:#1c4fa4;left:447.60px;letter-spacing:-0.271px;">Komentář 100</span>
<span class="t" id="t95" style="top:724px;font-size:12px;line-height:14px;height:14px;color:#1c4fa4;left:783.80px;letter-spacing:-0.391px;">Pořadí</span>
<div class="a" style="left:860px;top:34px;width:7px;height:740px;background:#00adef;"></div>
<div class="a" style="left:867px;top:34px;width:3px;height:740px;background:#ffffff;"></div>
<div class="a" style="left:870px;top:34px;width:211px;height:740px;background:#0054a6;"></div>
<div class="a" style="left:1081px;top:31px;width:3px;height:746px;background:#f8f8f8;"></div>
<div class="a" style="left:861.8px;top:392.2px;width:3.6px;height:3.6px;background:#4cc6f7;border-radius:50%;"></div>
<div class="a" style="left:861.8px;top:401.2px;width:3.6px;height:3.6px;background:#4cc6f7;border-radius:50%;"></div>
<div class="a" style="left:861.8px;top:410.2px;width:3.6px;height:3.6px;background:#4cc6f7;border-radius:50%;"></div>
<div class="a" style="left:859px;top:34px;width:1px;height:740px;background:#fafafa;"></div>
<span class="t" id="t96" style="top:46px;font-size:21px;line-height:23px;height:23px;color:#e6eef7;left:877.10px;letter-spacing:-0.582px;">Doklad OV/2010/1</span>
<svg class="a" style="left:1058px;top:47px;" width="15" height="15" viewBox="0 0 15 15"><path d="M5.4 5.5 H1.7 V13.5 H9.4 V9.6" fill="none" stroke="#fff" stroke-width="1.5"/><path d="M5 1.8 H13.4 V10" fill="none" stroke="#fff" stroke-width="1.5"/><path d="M5.6 9.6 L10 5.2" stroke="#fff" stroke-width="1.3"/><path d="M7.4 3.9 H11.6 V8.1 Z" fill="#fff"/></svg>
<div class="a" style="left:873px;top:80px;width:205px;height:24px;background:#00adef;"></div>
<div class="a" style="left:873px;top:104px;width:205px;height:123px;background:#fcfcfc;"></div>
<span class="t" id="t97" style="top:85px;font-size:13px;line-height:15px;height:15px;color:#fff;font-weight:bold;left:877.10px;letter-spacing:0.046px;">Základní údaje</span>
<div class="a" style="left:1053px;top:82px;width:1px;height:21px;background:#0a9ad6;"></div>
<svg class="a" style="left:1059px;top:88px;" width="14" height="8" viewBox="0 0 14 8"><path d="M0.5 7.5 L7 1 L13.5 7.5" fill="none" stroke="#fff" stroke-width="1.3"/></svg>
<span class="t" id="t98" style="top:111px;font-size:12px;line-height:14px;height:14px;color:#1c4fa4;left:880.60px;letter-spacing:-0.493px;">Popis:</span>
<div class="a" style="left:880px;top:125px;width:191px;height:1px;background:#e4e4e4;"></div>
<span class="t" id="t99" style="top:111px;font-size:12px;line-height:14px;height:14px;color:#000;right:14.57px;letter-spacing:-0.473px;">Pozvánka</span>
<span class="t" id="t100" style="top:133px;font-size:12px;line-height:14px;height:14px;color:#1c4fa4;left:880.60px;letter-spacing:-0.270px;">Přijal:</span>
<div class="a" style="left:880px;top:147px;width:191px;height:1px;background:#e4e4e4;"></div>
<span class="t" id="t101" style="top:133px;font-size:12px;line-height:14px;height:14px;color:#1c4fa4;right:14.73px;letter-spacing:-0.630px;">06.10.2010</span>
<span class="t" id="t102" style="top:133px;font-size:12px;line-height:14px;height:14px;color:#000;right:72.67px;letter-spacing:-0.572px;">Černá</span>
<span class="t" id="t103" style="top:155px;font-size:12px;line-height:14px;height:14px;color:#1c4fa4;left:880.60px;letter-spacing:-0.738px;">Stav:</span>
<div class="a" style="left:880px;top:169px;width:191px;height:1px;background:#e4e4e4;"></div>
<span class="t" id="t104" style="top:155px;font-size:12px;line-height:14px;height:14px;color:#000;right:14.38px;letter-spacing:-0.281px;">Otevřená</span>
<span class="t" id="t105" style="top:177px;font-size:12px;line-height:14px;height:14px;color:#1c4fa4;left:880.60px;letter-spacing:-0.237px;">Druh:</span>
<div class="a" style="left:880px;top:191px;width:191px;height:1px;background:#e4e4e4;"></div>
<span class="t" id="t106" style="top:177px;font-size:12px;line-height:14px;height:14px;color:#000;right:14.39px;letter-spacing:-0.288px;">Obyčejná zásilka</span>
<span class="t" id="t107" style="top:199px;font-size:12px;line-height:14px;height:14px;color:#b8b8b8;left:1034.10px;letter-spacing:-0.483px;">[...</span>
<div class="a" style="left:873px;top:235px;width:205px;height:24px;background:#00adef;"></div>
<div class="a" style="left:873px;top:259px;width:205px;height:51px;background:#fcfcfc;"></div>
<span class="t" id="t108" style="top:240px;font-size:13px;line-height:15px;height:15px;color:#fff;font-weight:bold;left:877.10px;letter-spacing:0.045px;">Ostatní údaje</span>
<div class="a" style="left:1053px;top:237px;width:1px;height:21px;background:#0a9ad6;"></div>
<svg class="a" style="left:1059px;top:243px;" width="14" height="8" viewBox="0 0 14 8"><path d="M0.5 7.5 L7 1 L13.5 7.5" fill="none" stroke="#fff" stroke-width="1.3"/></svg>
<span class="t" id="t109" style="top:266px;font-size:12px;line-height:14px;height:14px;color:#1c4fa4;left:880.60px;letter-spacing:0.082px;">Vytvořil:</span>
<div class="a" style="left:880px;top:280px;width:191px;height:1px;background:#e4e4e4;"></div>
<span class="t" id="t110" style="top:266px;font-size:12px;line-height:14px;height:14px;color:#1c4fa4;right:14.52px;letter-spacing:-0.419px;">2010-09-09 09:54:03</span>
<span class="t" id="t111" style="top:266px;font-size:12px;line-height:14px;height:14px;color:#000;right:121.60px;">K2</span>
<span class="t" id="t112" style="top:288px;font-size:12px;line-height:14px;height:14px;color:#1c4fa4;left:880.60px;letter-spacing:0.008px;">Změnil:</span>
<div class="a" style="left:880px;top:302px;width:191px;height:1px;background:#e4e4e4;"></div>
<span class="t" id="t113" style="top:288px;font-size:12px;line-height:14px;height:14px;color:#1c4fa4;right:14.52px;letter-spacing:-0.419px;">2010-10-06 09:02:45</span>
<span class="t" id="t114" style="top:288px;font-size:12px;line-height:14px;height:14px;color:#000;right:121.60px;">K2</span>
<div class="a" style="left:873px;top:695px;width:205px;height:24px;background:#00adef;"></div>
<div class="a" style="left:873px;top:719px;width:205px;height:52px;background:#fcfcfc;"></div>
<span class="t" id="t115" style="top:700px;font-size:13px;line-height:15px;height:15px;color:#fff;font-weight:bold;left:877.10px;letter-spacing:-0.128px;">Nastavení</span>
<div class="a" style="left:1053px;top:697px;width:1px;height:21px;background:#0a9ad6;"></div>
<svg class="a" style="left:1059px;top:703px;" width="14" height="8" viewBox="0 0 14 8"><path d="M0.5 7.5 L7 1 L13.5 7.5" fill="none" stroke="#fff" stroke-width="1.3"/></svg>
<span class="t" id="t116" style="top:727px;font-size:12px;line-height:14px;height:14px;color:#1c4fa4;left:887.60px;letter-spacing:0.206px;">Období</span>
<div class="a" style="left:880px;top:741px;width:191px;height:23px;background:#ffffe1;border:1px solid #00adef;"></div>
<span class="t" id="t117" style="top:746px;font-size:13px;line-height:15px;height:15px;color:#000;left:883.70px;letter-spacing:-0.341px;">2019</span>
<svg class="a" style="left:1054px;top:748px;" width="12" height="10" viewBox="0 0 12 10"><rect x="0" y="0" width="3" height="3" fill="#1f63b6"/><rect x="1" y="1" width="1" height="1" fill="#6a9ad6"/><rect x="4" y="0" width="3" height="3" fill="#1f63b6"/><rect x="5" y="1" width="1" height="1" fill="#6a9ad6"/><rect x="8" y="0" width="3" height="3" fill="#1f63b6"/><rect x="9" y="1" width="1" height="1" fill="#6a9ad6"/><path d="M0.3 4.6 L5.5 9 L10.7 4.6" fill="none" stroke="#1f63b6" stroke-width="1.15"/></svg>
<div class="a" style="left:0px;top:0px;width:1085px;height:1px;background:#6a6a6a;"></div>
<div class="a" style="left:0px;top:0px;width:1px;height:778px;background:#6a6a6a;"></div>
<div class="a" style="left:1084px;top:0px;width:1px;height:778px;background:#6a6a6a;"></div>
<div class="a" style="left:0px;top:777px;width:1085px;height:1px;background:#6a6a6a;"></div>
<svg class="a" style="left:530px;top:705px;" width="10" height="5" viewBox="0 0 10 5"><path d="M0 0 H9.4 L4.7 5 Z" fill="#179bd5"/></svg>
<svg class="a" style="left:553px;top:705px;" width="10" height="5" viewBox="0 0 10 5"><path d="M0 5 H9.4 L4.7 0 Z" fill="#179bd5"/></svg>
<div class="a" style="left:569px;top:697px;width:1px;height:21px;background:#0a95d0;"></div>
<div class="a" style="left:685px;top:697px;width:1px;height:21px;background:#0a95d0;"></div>
<div class="a" style="left:801px;top:697px;width:1px;height:21px;background:#0a95d0;"></div>
<svg class="a" style="left:575px;top:700px;" width="14" height="16" viewBox="0 0 14 16"><path d="M1 0.8 H8.2 L12 4.6 V14.8 H1 Z M8.2 0.8 V4.6 H12" fill="none" stroke="#fff" stroke-width="1.4"/></svg>
<svg class="a" style="left:597px;top:700px;" width="16" height="16" viewBox="0 0 16 16"><path d="M0.7 0.7 H8.7 V12 H0.7 Z" fill="none" stroke="#179bd5" stroke-width="1.2"/><path d="M5 3.4 H14 V15 H5 Z" fill="#00adef" stroke="#179bd5" stroke-width="1.2"/></svg>
<svg class="a" style="left:623px;top:701px;" width="11" height="14" viewBox="0 0 11 14"><path d="M0.8 1 L9.8 6.8 L0.8 12.6 Z" fill="none" stroke="#179bd5" stroke-width="1.2"/></svg>
<svg class="a" style="left:643px;top:700px;" width="16" height="16" viewBox="0 0 16 16"><path d="M1 14.4 L1.8 10.6 L11.4 1 L14.2 3.8 L4.6 13.4 Z" fill="none" stroke="#179bd5" stroke-width="1.2"/></svg>
<svg class="a" style="left:668px;top:700px;" width="13" height="16" viewBox="0 0 13 16"><path d="M0.5 3 H12 M4 3 V1 H8.5 V3 M1.8 3 V15 H10.7 V3 M4.4 5.5 V12.5 M6.25 5.5 V12.5 M8.1 5.5 V12.5" fill="none" stroke="#179bd5" stroke-width="1.1"/></svg>
<svg class="a" style="left:688px;top:699px;" width="21" height="19" viewBox="0 0 21 19"><path d="M4.3 5.3 V0.8 H15 V5.3" fill="none" stroke="#fff" stroke-width="1.4"/><rect x="0.8" y="5.3" width="17.8" height="7.5" rx="1" fill="none" stroke="#fff" stroke-width="1.5"/><rect x="4.3" y="10" width="10.7" height="5.8" fill="#00adef" stroke="#fff" stroke-width="1.4"/><path d="M14.7 15.6 H20 L17.4 18.2 Z" fill="#fff"/></svg>
<svg class="a" style="left:713px;top:700px;" width="18" height="19" viewBox="0 0 18 19"><rect x="0.6" y="4.4" width="3.3" height="9.8" fill="none" stroke="#fff" stroke-width="1.2"/><rect x="5.7" y="7.4" width="3.3" height="6.8" fill="none" stroke="#fff" stroke-width="1.2"/><rect x="10.9" y="0.8" width="3" height="14" fill="none" stroke="#fff" stroke-width="1.2"/><path d="M11.7 15.2 H17.3 L14.5 18 Z" fill="#fff"/></svg>
<svg class="a" style="left:736px;top:699px;" width="19" height="19" viewBox="0 0 19 19"><g fill="none" stroke="#fff" stroke-width="1.1"><path d="M7.8 0.8 L11.3 2.4 V6 L7.8 7.6 L4.3 6 V2.4 Z M4.3 2.4 L7.8 4 L11.3 2.4 M7.8 4 V7.6"/><path d="M4 7.8 L7.5 9.4 V13 L4 14.6 L0.6 13 V9.4 Z M0.6 9.4 L4 11 L7.5 9.4 M4 11 V14.6"/><path d="M11.6 7.8 L15 9.4 V13 L11.6 14.6 L8.1 13 V9.4 Z M8.1 9.4 L11.6 11 L15 9.4 M11.6 11 V14.6"/></g><path d="M12.6 15.5 H18.2 L15.4 18.3 Z" fill="#fff"/></svg>
<svg class="a" style="left:758px;top:699px;" width="19" height="19" viewBox="0 0 19 19"><rect x="0.7" y="0.7" width="3.6" height="15" fill="none" stroke="#fff" stroke-width="1.2"/><rect x="6" y="0.2" width="4.8" height="16" fill="#fff"/><rect x="12.4" y="0.7" width="3.6" height="15" fill="none" stroke="#fff" stroke-width="1.2"/><path d="M12.8 16.2 H18.4 L15.6 19 Z" fill="#fff"/></svg>
<svg class="a" style="left:782px;top:699px;" width="19" height="19" viewBox="0 0 19 19"><circle cx="7.6" cy="8.2" r="5.3" fill="none" stroke="#fff" stroke-width="1.3"/><circle cx="7.6" cy="8.2" r="6.6" fill="none" stroke="#fff" stroke-width="1.6" stroke-dasharray="1.3 1.29"/><circle cx="7.6" cy="8.2" r="2.2" fill="none" stroke="#fff" stroke-width="1.2"/><path d="M12.2 15.6 H17.8 L15 18.4 Z" fill="#fff"/></svg>
<svg class="a" style="left:804px;top:701px;" width="20" height="14" viewBox="0 0 20 14"><path d="M0 1.7 H19 M0 6.7 H19 M0 11.7 H19" stroke="#fff" stroke-width="1.2"/></svg>
</body></html>
